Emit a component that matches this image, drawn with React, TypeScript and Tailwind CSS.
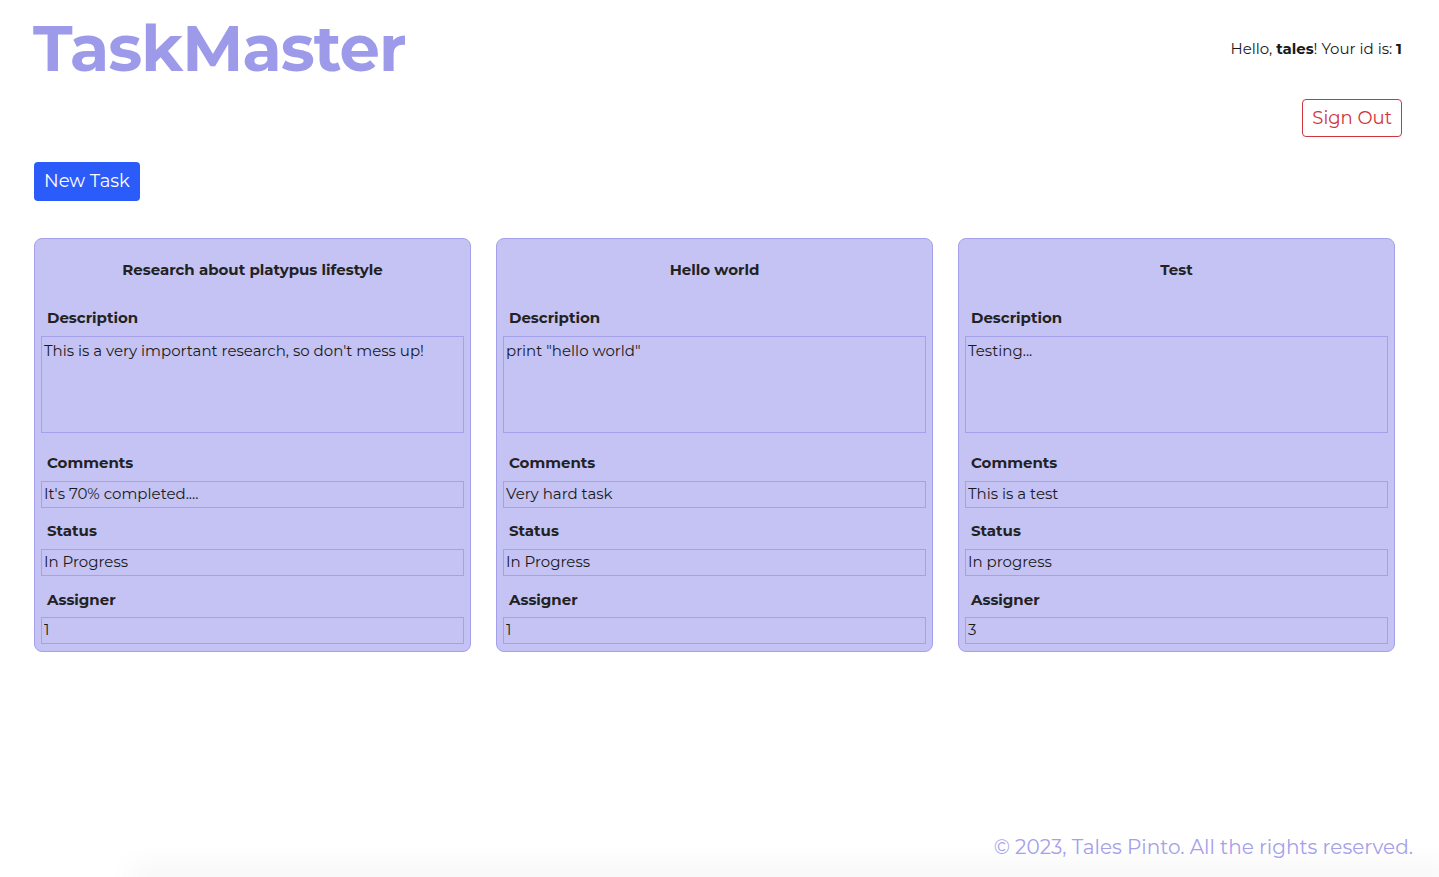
const tasks = [
  {
    title: "Research about platypus lifestyle",
    description: "This is a very important research, so don't mess up!",
    comments: "It's 70% completed....",
    status: "In Progress",
    assigner: "1",
  },
  {
    title: "Hello world",
    description: 'print "hello world"',
    comments: "Very hard task",
    status: "In Progress",
    assigner: "1",
  },
  {
    title: "Test",
    description: "Testing...",
    comments: "This is a test",
    status: "In progress",
    assigner: "3",
  },
];

type Task = (typeof tasks)[number];

function TaskCard({ task }: { task: Task }) {
  const field =
    "block w-full border border-[#a4a0ea] bg-transparent px-[2px] text-[15px] leading-[20px] text-[#1a1a1a] outline-none";
  return (
    <div className="flex w-[437px] flex-col rounded-lg border border-[#a4a0ea] bg-[#c5c3f3] px-[6px] pb-[7px] pt-[21px]">
      <h2 className="text-center text-[15px] font-bold leading-[20px] text-[#222]">{task.title}</h2>

      <label className="mt-[28px] mb-[8px] pl-[6px] text-[15px] font-bold leading-[20px] text-[#222]">Description</label>
      <textarea readOnly value={task.description} className={`${field} h-[97px] resize-none pt-[4px]`} />

      <label className="mt-[20px] mb-[8px] pl-[6px] text-[15px] font-bold leading-[20px] text-[#222]">Comments</label>
      <input readOnly value={task.comments} className={`${field} h-[27px] pt-[2px] pb-[4px]`} />

      <label className="mt-[13px] mb-[8px] pl-[6px] text-[15px] font-bold leading-[20px] text-[#222]">Status</label>
      <input readOnly value={task.status} className={`${field} h-[27px] pt-[2px] pb-[4px]`} />

      <label className="mt-[14px] mb-[7px] pl-[6px] text-[15px] font-bold leading-[20px] text-[#222]">Assigner</label>
      <input readOnly value={task.assigner} className={`${field} h-[27px] pt-[2px] pb-[4px]`} />
    </div>
  );
}

export default function App() {
  return (
    <div className="flex min-h-screen flex-col overflow-hidden bg-white font-['Montserrat','Inter',sans-serif] text-[#1a1a1a]">
      <header className="flex items-start justify-between pl-[33px] pr-[37px]">
        <h1 className="pt-[16px] text-[64px] font-bold leading-none tracking-[-1px] text-[#9d9be9]">TaskMaster</h1>
        <div className="flex flex-col items-end pt-[39px]">
          <p className="text-[15px] leading-[20px]">
            Hello, <b>tales</b>! Your id is: <b>1</b>
          </p>
          <button className="mt-[40px] h-[38px] rounded border border-[#d0343c] px-[9px] text-[18px] text-[#d0343c]">
            Sign Out
          </button>
        </div>
      </header>

      <div className="mt-[25px] pl-[34px]">
        <button className="h-[39px] rounded bg-[#2b5cfa] px-[10px] text-[18px] text-white">New Task</button>
      </div>

      <main className="mt-[37px] flex gap-[25px] pl-[34px]">
        {tasks.map((t) => (
          <TaskCard key={t.title} task={t} />
        ))}
      </main>

      <footer className="mt-auto">
        <p className="pb-[16px] pr-[26px] text-right text-[20px] leading-[28px] text-[#a4a0ea]">
          © 2023, Tales Pinto. All the rights reserved.
        </p>
        <div className="ml-[140px] h-0 shadow-[0_0_28px_10px_rgba(0,0,0,0.05)]" />
      </footer>
    </div>
  );
}
